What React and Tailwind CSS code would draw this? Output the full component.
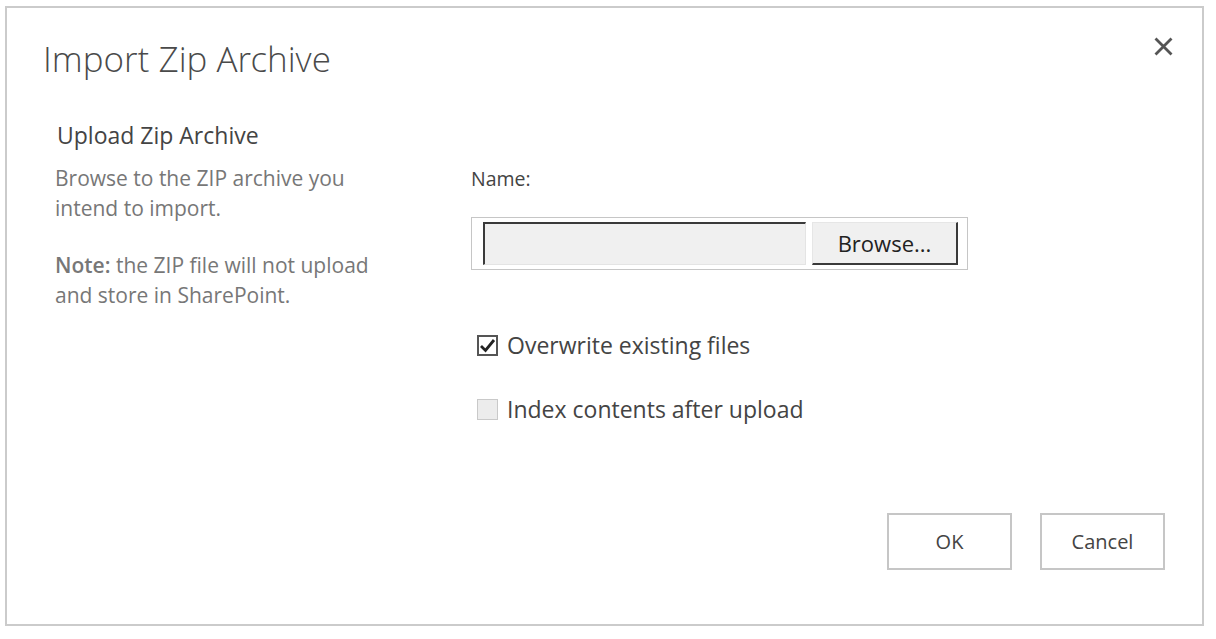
import React from "react";

export default function App() {
  const font = { fontFamily: '"Open Sans", "Noto Sans", sans-serif' };
  return (
    <div className="w-[1216px] h-[639px] bg-white overflow-hidden pt-[6px] pl-[5px]" style={font}>
      <div className="relative w-[1199px] h-[620px] border-2 border-[#cbcbcb] bg-white">
        <svg className="absolute left-[1146px] top-[28px]" width="21" height="21" viewBox="0 0 21 21">
          <path d="M2.5 2.5 L18.5 18.5 M18.5 2.5 L2.5 18.5" stroke="#555" strokeWidth="2.8" />
        </svg>
        <h1
          className="pl-[36px] pt-[27px] text-[35px] leading-[48px] font-light text-[#4a4a4a]"
          style={{ fontFamily: '"Open Sans Light", "Open Sans", "Noto Sans", sans-serif' }}
        >
          Import Zip Archive
        </h1>
        <div className="flex mt-[35px]">
          <div className="w-[464px] pl-[48px]">
            <div className="pl-[2px] text-[23px] leading-[34px] text-[#444]">Upload Zip Archive</div>
            <div className="mt-[11px] w-[335px] text-[21px] leading-[30px] text-[#777]">
              <p>Browse to the ZIP archive you intend to import.</p>
              <p className="mt-[27px]">
                <b className="font-semibold">Note:</b> the ZIP file will not upload and store in SharePoint.
              </p>
            </div>
          </div>
          <div className="pt-[46px]">
            <div className="text-[19.5px] leading-[30px] text-[#444]">Name:</div>
            <div className="mt-[23px] w-[497px] h-[53px] border border-[#c6c6c6] flex items-center pl-[11px] gap-[6px]">
              <div className="w-[323px] h-[43px] bg-[#f0f0f0] border-t-2 border-l-2 border-[#3a3a3a] border-r border-b border-r-[#e4e4e4] border-b-[#e4e4e4]"></div>
              <div className="w-[146px] h-[43px] bg-[#f0f0f0] border-t border-l border-[#e6e6e6] border-r-2 border-b-2 border-r-[#3a3a3a] border-b-[#3a3a3a] flex items-center justify-center text-[22px] text-[#222]">
                Browse...
              </div>
            </div>
            <div className="mt-[60px] flex items-center pl-[6px] gap-[9px] h-[30px]">
              <div className="w-[21px] h-[21px] border-2 border-[#555] bg-white flex items-center justify-center">
                <svg width="17" height="17" viewBox="0 0 17 17">
                  <path d="M2 9 L6.5 13.5 L15 3" fill="none" stroke="#222" strokeWidth="2.8" />
                </svg>
              </div>
              <span className="text-[23px] leading-[30px] text-[#444]">Overwrite existing files</span>
            </div>
            <div className="mt-[34px] flex items-center pl-[6px] gap-[9px] h-[30px]">
              <div className="w-[21px] h-[21px] border border-[#c9c9c9] bg-[#ececec]"></div>
              <span className="text-[23px] leading-[30px] text-[#444]">Index contents after upload</span>
            </div>
          </div>
        </div>
        <div className="absolute left-[880px] top-[505px] flex gap-[28px]">
          <button className="w-[125px] h-[57px] border-2 border-[#c6c6c6] bg-white text-[20px] text-[#444]">OK</button>
          <button className="w-[125px] h-[57px] border-2 border-[#c6c6c6] bg-white text-[20px] text-[#444]">Cancel</button>
        </div>
      </div>
    </div>
  );
}
